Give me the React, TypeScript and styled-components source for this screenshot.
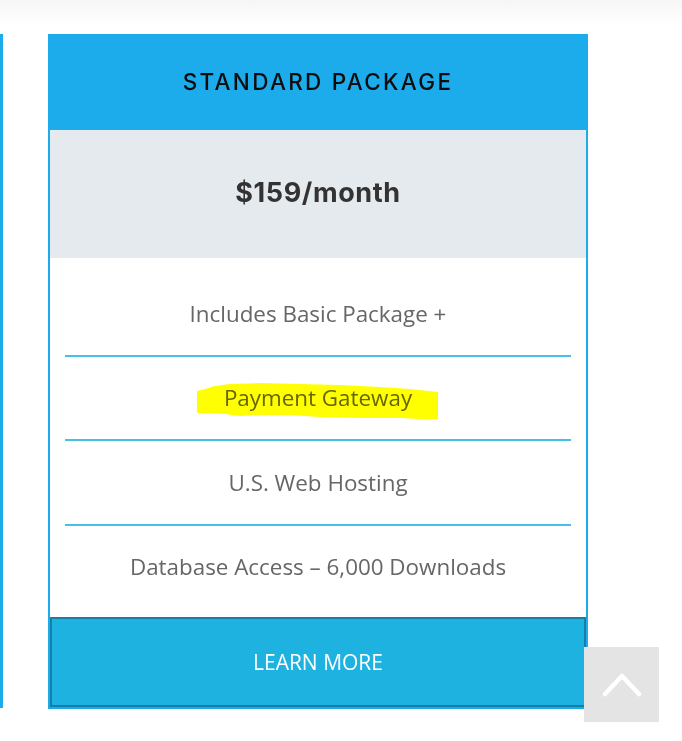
import React from "react";
import styled, { createGlobalStyle } from "styled-components";

const Global = createGlobalStyle`
  html, body { margin: 0; padding: 0; background: #ffffff; }
  body { width: 682px; height: 741px; overflow: hidden; }
`;

const Page = styled.div`
  position: relative;
  width: 682px;
  height: 741px;
  display: flex;
  flex-direction: column;
`;

const TopShade = styled.div`
  height: 34px;
  flex: none;
  background: linear-gradient(to bottom, #f6f6f6 0px, #fbfbfb 14px, #ffffff 26px);
`;

const Row = styled.div`
  display: flex;
  align-items: stretch;
  gap: 45px;
`;

const PrevCardEdge = styled.div`
  width: 3px;
  flex: none;
  background: #1caceb;
  margin-bottom: 1px;
`;

const Card = styled.div`
  width: 540px;
  box-sizing: border-box;
  border: 2px solid #1caceb;
  display: flex;
  flex-direction: column;
  background: #fff;
`;

const Header = styled.div`
  height: 94px;
  box-sizing: border-box;
  margin: 0 -2px;
  background: #1caceb;
  display: flex;
  align-items: center;
  justify-content: center;
  font-family: "Inter", "Liberation Sans", sans-serif;
  font-weight: 500;
  font-size: 22.5px;
  letter-spacing: 2.3px;
  color: #0d0d0d;
  padding-bottom: 3px;
`;

const Price = styled.div`
  height: 128px;
  box-sizing: border-box;
  background: #e5eaef;
  display: flex;
  align-items: center;
  justify-content: center;
  font-family: "Inter", "Liberation Sans", sans-serif;
  font-weight: 700;
  font-size: 27px;
  letter-spacing: 0.6px;
  color: #333333;
  padding-bottom: 3px;
`;

const List = styled.ul`
  list-style: none;
  margin: 0;
  padding: 14px 15px 9px;
`;

const Item = styled.li<{ $last?: boolean }>`
  height: 82.5px;
  display: flex;
  align-items: center;
  justify-content: center;
  font-family: "Open Sans", "Liberation Sans", sans-serif;
  font-size: 22.4px;
  color: #666666;
  border-bottom: ${(p) => (p.$last ? "none" : "2px solid #44c0e9")};
`;

const Marked = styled.span`
  position: relative;
  display: inline-block;
  line-height: 27px;
`;

const Marker = styled.svg`
  position: absolute;
  left: -27px;
  top: -1px;
  width: 241px;
  height: 37px;
  mix-blend-mode: multiply;
  pointer-events: none;
`;

const LearnMore = styled.button`
  height: 90px;
  box-sizing: border-box;
  border: 2px solid #177ea6;
  background: #1db2e0;
  color: #ffffff;
  font-family: "Open Sans", "Liberation Sans", sans-serif;
  font-size: 21px;
  text-transform: uppercase;
  cursor: pointer;
  padding: 0;
`;

const ScrollTop = styled.div`
  position: absolute;
  left: 584px;
  top: 647px;
  width: 75px;
  height: 75px;
  background: #e4e4e4;
  display: flex;
  align-items: center;
  justify-content: center;
`;

export default function App() {
  return (
    <>
      <Global />
      <Page>
        <TopShade />
        <Row>
          <PrevCardEdge />
          <Card>
            <Header>STANDARD PACKAGE</Header>
            <Price>$159/month</Price>
            <List>
              <Item>Includes Basic Package +</Item>
              <Item>
                <Marked>
                  Payment Gateway
                  <Marker viewBox="0 0 241 37">
                    <polygon
                      fill="#ffff00"
                      points="0,8 8,6 18,3 33,1 63,0 103,1 143,2 183,4 213,6 241,9 241,36 223,36 203,35 163,35 123,34 93,32 63,32 43,33 28,31 13,30 0,30"
                    />
                  </Marker>
                </Marked>
              </Item>
              <Item>U.S. Web Hosting</Item>
              <Item $last>Database Access – 6,000 Downloads</Item>
            </List>
            <LearnMore>Learn More</LearnMore>
          </Card>
        </Row>
        <ScrollTop>
          <svg width="40" height="24" viewBox="0 0 40 24">
            <polyline
              points="3,21 20,3 37,21"
              fill="none"
              stroke="#ffffff"
              strokeWidth="4.5"
              strokeLinecap="round"
              strokeLinejoin="round"
            />
          </svg>
        </ScrollTop>
      </Page>
    </>
  );
}
